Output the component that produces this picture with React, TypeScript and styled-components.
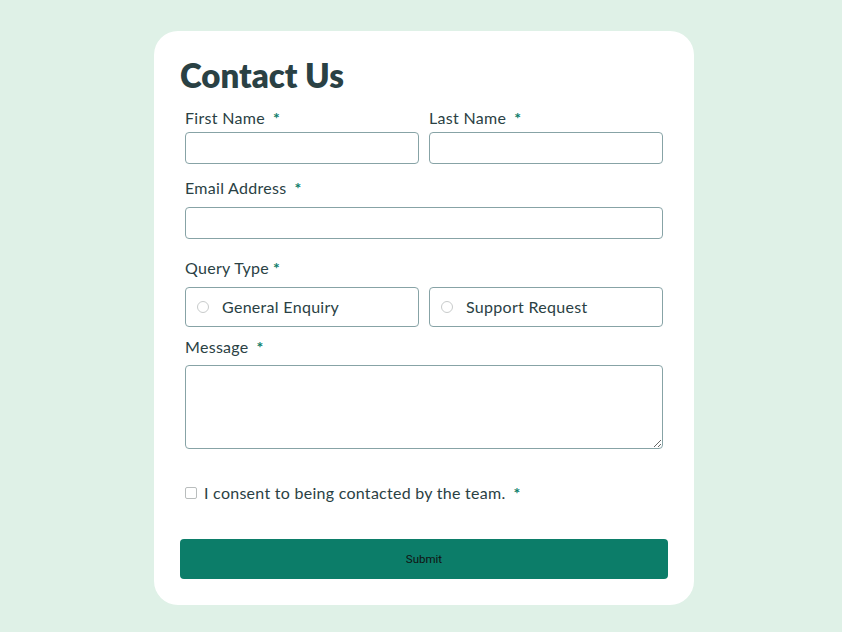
import React from "react";
import styled, { createGlobalStyle } from "styled-components";

const Global = createGlobalStyle`
  * { box-sizing: border-box; }
  html, body { margin: 0; padding: 0; }
  body {
    background: #dff1e7;
    font-family: Lato, "Noto Sans", sans-serif;
    color: #2a4144;
  }
`;

const Page = styled.main`
  min-height: 632px;
  display: flex;
  justify-content: center;
  padding: 31px 0 0 6px;
`;

const Card = styled.form`
  width: 540px;
  height: 574px;
  background: #ffffff;
  border-radius: 24px;
  padding: 20px 26px 0;
  display: flex;
  flex-direction: column;
`;

const Title = styled.h1`
  margin: 0;
  font-size: 33px;
  line-height: 48px;
  font-weight: 800;
  color: #2a4144;
`;

const Fields = styled.div`
  padding: 0 5px;
  display: flex;
  flex-direction: column;
`;

const Row = styled.div<{ $mt: number }>`
  display: grid;
  grid-template-columns: 1fr 1fr;
  column-gap: 10px;
  margin-top: ${(p) => p.$mt}px;
`;

const Field = styled.div<{ $mt?: number }>`
  display: flex;
  flex-direction: column;
  margin-top: ${(p) => p.$mt ?? 0}px;
`;

const Label = styled.label<{ $gap: number }>`
  font-size: 16px;
  letter-spacing: 0.3px;
  line-height: 20px;
  color: #2a4144;
  margin-bottom: ${(p) => p.$gap}px;
`;

const Star = styled.span<{ $ml?: number }>`
  color: #0c7d69;
  font-weight: 700;
  margin-left: ${(p) => p.$ml ?? 8}px;
`;

const TextInput = styled.input`
  height: 32px;
  width: 100%;
  border: 1px solid #87a3a6;
  border-radius: 4px;
  padding: 0 10px;
  font: inherit;
  background: #fff;
`;

const Area = styled.textarea`
  height: 84px;
  width: 100%;
  border: 1px solid #87a3a6;
  border-radius: 4px;
  padding: 8px 10px;
  font: inherit;
  display: block;
`;

const RadioBox = styled.label`
  height: 40px;
  border: 1px solid #87a3a6;
  border-radius: 4px;
  display: flex;
  align-items: center;
  padding: 0 0 2px 11px;
  gap: 13px;
  font-size: 16px;
  letter-spacing: 0.3px;
  color: #2a4144;
`;

const Radio = styled.input`
  appearance: none;
  margin: 2px 0 0;
  width: 12px;
  height: 12px;
  border: 1px solid #c8cbcb;
  border-radius: 50%;
  background: #fff;
`;

const Consent = styled.label`
  margin-top: 34px;
  display: flex;
  align-items: center;
  gap: 7px;
  font-size: 16px;
  letter-spacing: 0.27px;
  line-height: 20px;
  color: #2a4144;
`;

const Check = styled.input`
  appearance: none;
  margin: 0;
  width: 12px;
  height: 12px;
  border: 1px solid #b9bdbd;
  border-radius: 2px;
  background: #fff;
`;

const Submit = styled.button`
  margin-top: 36px;
  height: 40px;
  width: 100%;
  border: none;
  border-radius: 4px;
  background: #0c7d69;
  color: #111;
  font-family: Roboto, "Liberation Sans", sans-serif;
  font-size: 11.5px;
  padding: 0;
`;

export default function App() {
  return (
    <>
      <Global />
      <Page>
        <Card onSubmit={(e) => e.preventDefault()}>
          <Title>Contact Us</Title>
          <Fields>
            <Row $mt={9}>
              <Field>
                <Label $gap={4}>
                  First Name<Star>*</Star>
                </Label>
                <TextInput type="text" />
              </Field>
              <Field>
                <Label $gap={4}>
                  Last Name<Star>*</Star>
                </Label>
                <TextInput type="text" />
              </Field>
            </Row>
            <Field $mt={14}>
              <Label $gap={9}>
                Email Address<Star>*</Star>
              </Label>
              <TextInput type="email" />
            </Field>
            <Field $mt={19}>
              <Label $gap={9}>
                Query Type<Star $ml={4}>*</Star>
              </Label>
              <Row $mt={0}>
                <RadioBox>
                  <Radio type="radio" name="q" />
                  General Enquiry
                </RadioBox>
                <RadioBox>
                  <Radio type="radio" name="q" />
                  Support Request
                </RadioBox>
              </Row>
            </Field>
            <Field $mt={10}>
              <Label $gap={8}>
                Message<Star>*</Star>
              </Label>
              <Area />
            </Field>
            <Consent>
              <Check type="checkbox" />
              <span>
                I consent to being contacted by the team.<Star>*</Star>
              </span>
            </Consent>
          </Fields>
          <Submit type="submit">Submit</Submit>
        </Card>
      </Page>
    </>
  );
}
